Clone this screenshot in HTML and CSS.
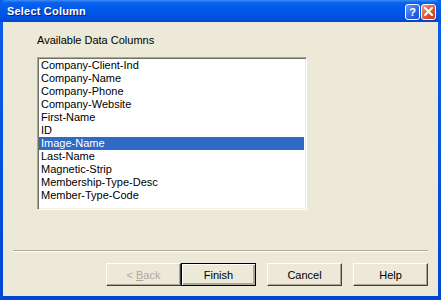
FILE: index.html
```html
<!DOCTYPE html>
<html lang="en">
<head>
    <meta charset="UTF-8">
    <title>Select Column</title>
    <link rel="stylesheet" href="styles.css">
</head>
<body>
    <div class="window">
        <!-- Title bar -->
        <div class="titlebar">
            <span class="title">Select Column</span>
            <div class="caption-buttons">
                <div class="cap-btn help-btn">?</div>
                <div class="cap-btn close-btn">
                    <svg width="9" height="9" viewBox="0 0 9 9"><path d="M1 1 L8 8 M8 1 L1 8" stroke="#fff" stroke-width="2" stroke-linecap="square"/></svg>
                </div>
            </div>
        </div>

        <!-- Client area -->
        <div class="client">
            <div class="content">
                <div class="caption">Available Data Columns</div>
                <div class="listbox">
                    <div class="item">Company-Client-Ind</div>
                    <div class="item">Company-Name</div>
                    <div class="item">Company-Phone</div>
                    <div class="item">Company-Website</div>
                    <div class="item">First-Name</div>
                    <div class="item">ID</div>
                    <div class="item selected">Image-Name</div>
                    <div class="item">Last-Name</div>
                    <div class="item">Magnetic-Strip</div>
                    <div class="item">Membership-Type-Desc</div>
                    <div class="item">Member-Type-Code</div>
                </div>
            </div>
            <div class="separator"></div>
            <div class="buttons">
                <div class="btn-pair">
                    <div class="btn disabled"><span>&lt; <u>B</u>ack</span></div>
                    <div class="btn default"><span>Finish</span></div>
                </div>
                <div class="btn"><span>Cancel</span></div>
                <div class="btn"><span>Help</span></div>
            </div>
        </div>
    </div>
</body>
</html>
```

FILE: styles.css
```css
body {
    margin: 0;
    font-family: "Liberation Sans", Arial, sans-serif;
    font-size: 11px;
    color: #000;
    background: #0a246a;
}
.window {
    width: 441px;
    height: 300px;
    display: flex;
    flex-direction: column;
    background: linear-gradient(to bottom, #0a5fe8, #0046d5);
    box-sizing: border-box;
}
.titlebar {
    height: 22px;
    display: flex;
    align-items: center;
    justify-content: space-between;
    padding: 0 5px 0 7px;
    background: linear-gradient(to bottom, #3d8cf5 0%, #0a61ee 12%, #0058e8 45%, #0052e0 80%, #0045cc 100%);
    border-radius: 6px 6px 0 0;
}
.title {
    color: #fff;
    font-weight: bold;
    font-size: 11px;
    text-shadow: 1px 1px #0a1e6e;
    letter-spacing: 0.2px;
}
.caption-buttons {
    display: flex;
    gap: 1px;
    margin-top: 1px;
}
.cap-btn {
    width: 13px;
    height: 14px;
    border: 1px solid #fff;
    border-radius: 3px;
    display: flex;
    align-items: center;
    justify-content: center;
    color: #fff;
    font-weight: bold;
    font-size: 11px;
}
.help-btn {
    background: linear-gradient(135deg, #6a9cf8, #2a62e0 60%, #1b4ec8);
}
.close-btn {
    background: linear-gradient(135deg, #f0a080, #e05a30 50%, #c83a18);
}
.client {
    flex: 1;
    margin: 0 3px 4px 3px;
    background: #ece9d8;
    display: flex;
    flex-direction: column;
}
.content {
    padding: 12px 0 0 34px;
    height: 216px;
    box-sizing: border-box;
}
.caption {
    line-height: 13px;
    margin-bottom: 10px;
}
.listbox {
    width: 270px;
    height: 153px;
    box-sizing: border-box;
    background: #fff;
    border-top: 1px solid #aca899;
    border-left: 1px solid #aca899;
    border-right: 1px solid #fff;
    border-bottom: 1px solid #fff;
    box-shadow: inset 1px 1px 0 #716f64, inset -1px -1px 0 #f1efe2;
    padding: 1px 2px 1px 1px;
}
.item {
    height: 13px;
    line-height: 13px;
    padding-left: 2px;
    white-space: nowrap;
}
.item.selected {
    background: #316ac5;
    color: #fff;
}
.separator {
    margin: 12px 10px 0 10px;
    border-top: 1px solid #aca899;
    border-bottom: 1px solid #fff;
}
.buttons {
    display: flex;
    justify-content: flex-end;
    gap: 11px;
    padding: 11px 10px 0 0;
}
.btn-pair {
    display: flex;
}
.btn {
    width: 75px;
    height: 23px;
    box-sizing: border-box;
    background: #ece9d8;
    border-top: 1px solid #fff;
    border-left: 1px solid #fff;
    border-right: 1px solid #404040;
    border-bottom: 1px solid #404040;
    box-shadow: inset -1px -1px 0 #aca899;
    display: flex;
    align-items: center;
    justify-content: center;
}
.btn.default {
    border: 1px solid #000;
    box-shadow: inset 1px 1px 0 #fff, inset -2px -2px 0 #aca899, inset -1px -1px 0 #404040;
}
.btn.disabled {
    color: #aca899;
}
.btn u {
    text-decoration: underline;
}
```
